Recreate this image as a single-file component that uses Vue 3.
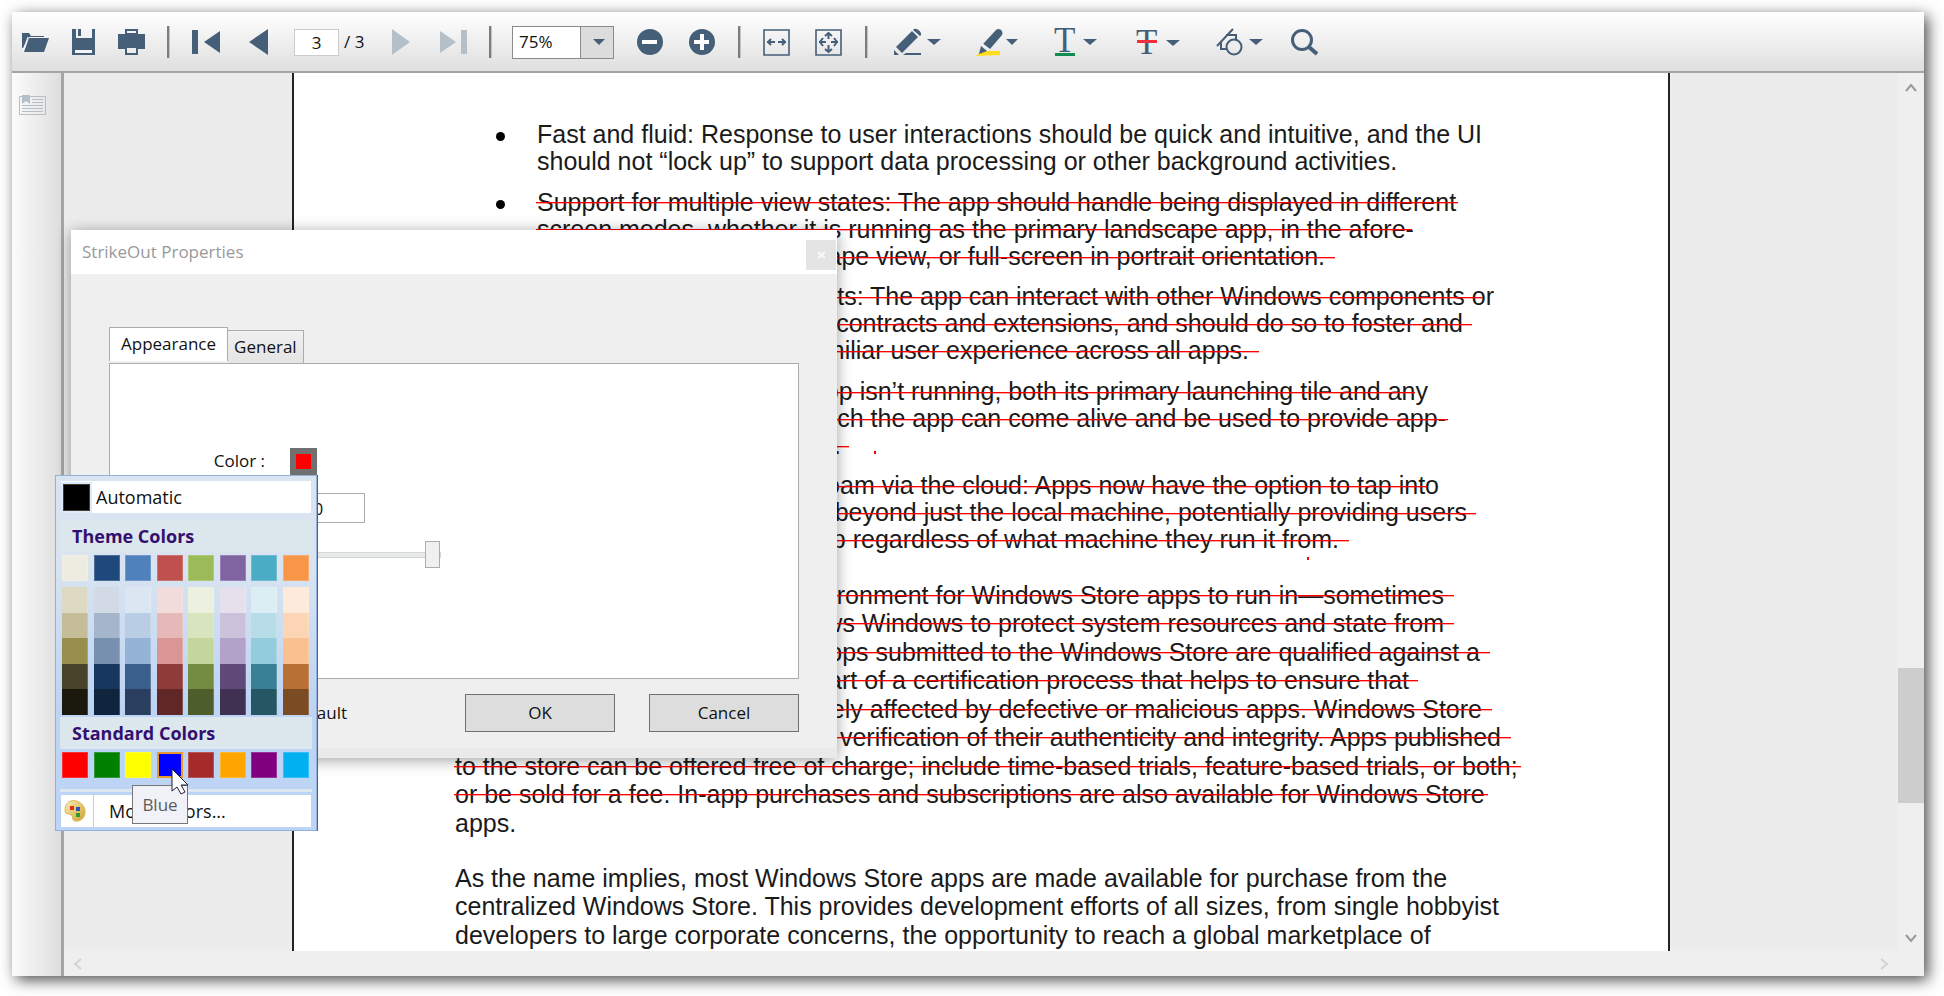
<script setup>
import { ref } from 'vue'

const pageNo = ref('3')
const zoom = ref('75%')
const opacity = ref('100')
const level = ref(100)

/* end: right edge of the line inside its column; strike: how far the rule runs past (or short of) the text */
const bullets = [
  [
    { text: 'Fast and fluid: Response to user interactions should be quick and intuitive, and the UI' },
    { text: 'should not “lock up” to support data processing or other background activities.' },
  ],
  [
    { text: 'Support for multiple view states: The app should handle being displayed in different', strike: 2 },
    { text: 'screen modes, whether it is running as the primary landscape app, in the afore-', strike: -2 },
    { text: 'landscape view, or full-screen in portrait orientation.', end: 788, strike: 10 },
  ],
  [
    { text: 'contracts: The app can interact with other Windows components or', end: 957, strike: -12 },
    { text: 'use contracts and extensions, and should do so to foster and', end: 926, strike: 9 },
    { text: 'familiar user experience across all apps.', end: 712, strike: 10 },
  ],
  [
    { text: 'app isn’t running, both its primary launching tile and any', end: 891, strike: -13 },
    { text: 'which the app can come alive and be used to provide app-', end: 909, strike: 2 },
    { text: 'activity.', end: 304, strike: 8 },
  ],
  [
    { text: 'roam via the cloud: Apps now have the option to tap into', end: 902, strike: -12 },
    { text: 'go beyond just the local machine, potentially providing users', end: 930, strike: 9 },
    { text: 'app regardless of what machine they run it from.', end: 802, strike: 10 },
  ],
]

const body = [
  [
    { text: 'environment for Windows Store apps to run in—sometimes', end: 989, strike: 10 },
    { text: 'allows Windows to protect system resources and state from', end: 989, strike: 10 },
    { text: 'apps submitted to the Windows Store are qualified against a', end: 1025, strike: 10 },
    { text: 'part of a certification process that helps to ensure that', end: 954, strike: 9 },
    { text: 'adversely affected by defective or malicious apps. Windows Store', end: 1027, strike: 10 },
    { text: 'and verification of their authenticity and integrity. Apps published', end: 1046, strike: 10 },
    { text: 'to the store can be offered free of charge; include time-based trials, feature-based trials, or both;', strike: 3 },
    { text: 'or be sold for a fee. In-app purchases and subscriptions are also available for Windows Store', strike: 3 },
    { text: 'apps.' },
  ],
  [
    { text: 'As the name implies, most Windows Store apps are made available for purchase from the' },
    { text: 'centralized Windows Store. This provides development efforts of all sizes, from single hobbyist' },
    { text: 'developers to large corporate concerns, the opportunity to reach a global marketplace of' },
  ],
]

const theme = ['#eeece1', '#1f497d', '#4f81bd', '#c0504d', '#9bbb59', '#8064a2', '#4bacc6', '#f79646']
const tints = [
  '#ddd9c3', '#d2dae5', '#dce6f2', '#f2dcdb', '#ebf1de', '#e6e0ec', '#dbeef4', '#fdeada',
  '#c4bd97', '#a5b5cc', '#b9cde5', '#e6b9b8', '#d7e4bd', '#ccc1da', '#b7dee8', '#fcd5b5',
  '#988e4c', '#7890b0', '#95b3d7', '#d99694', '#c3d69b', '#b3a2c7', '#93cddd', '#fac090',
  '#494429', '#17375e', '#3b5f8c', '#8f3b39', '#748c42', '#604a7a', '#388194', '#b97034',
  '#1b190e', '#10243e', '#2a3f60', '#602726', '#4d5d2c', '#403152', '#255663', '#7b4b23',
]
const standard = ['#ff0000', '#008000', '#ffff00', '#0000ff', '#a52a2a', '#ffa500', '#800080', '#00b0f0']

const boxStyle = (l) => (l.end ? { width: l.end + 'px' } : {})
</script>

<template>
  <div class="desk">
    <main class="window">
      <header class="toolbar">
        <div class="group files">
          <button aria-label="Open"><svg width="27" height="28"><path d="M0 5h7l2 3h13v1H7L1 20H0z" fill="#465f78"/><path d="M7 10h20l-5 14H2z" fill="#465f78"/><path d="M6 9L1 23" stroke="#fff"/></svg></button>
          <button aria-label="Save"><svg width="27" height="28"><path d="M2 1h4v9h16V1h3v26H2z" fill="#465f78"/><path d="M8 1h3v7H8z" fill="#465f78"/><path d="M5 22h17v3H5z" fill="#f4f4f4"/></svg></button>
          <button aria-label="Print"><svg width="27" height="28"><path d="M8 7V2h11v5M8 20v6h11v-6" fill="none" stroke="#465f78" stroke-width="2"/><path d="M0 6h27v15H0z" fill="#465f78"/><path d="M9 20h9v5H9z" fill="#eee"/><path d="M8 6h11" stroke="#465f78" stroke-width="2"/></svg></button>
        </div>
        <i class="sep"></i>
        <div class="group nav">
          <button aria-label="First page"><svg width="28" height="28"><path d="M0 2h6v24H0zM12 14L28 3v22z" fill="#465f78"/></svg></button>
          <button aria-label="Previous page"><svg width="26" height="28"><path d="M5 14L24 1v26z" fill="#465f78"/></svg></button>
          <label class="pages"><input v-model="pageNo" aria-label="Page number"><span>/ 3</span></label>
          <button aria-label="Next page"><svg width="26" height="28"><path d="M2 1v26l18-13z" fill="#b5bfc8"/></svg></button>
          <button aria-label="Last page"><svg width="27" height="28"><path d="M0 3v22l16-11zM21 2h6v24h-6z" fill="#b5bfc8"/></svg></button>
        </div>
        <i class="sep"></i>
        <div class="group zooming">
          <div class="combo">
            <input v-model="zoom" aria-label="Zoom level">
            <button aria-label="Zoom levels"><svg width="12" height="6"><path d="M0 0h12L6 6z" fill="#465f78"/></svg></button>
          </div>
          <button aria-label="Zoom out"><svg width="30" height="28"><circle cx="14" cy="14" r="13" fill="#465f78"/><path d="M6 12h15v4H6z" fill="#fff"/></svg></button>
          <button aria-label="Zoom in"><svg width="28" height="28"><circle cx="14" cy="14" r="13" fill="#465f78"/><path d="M6 12h15v4H6zM12 6h4v16h-4z" fill="#fff"/></svg></button>
        </div>
        <i class="sep"></i>
        <div class="group fit">
          <button aria-label="Fit width"><svg width="30" height="28"><g fill="none" stroke="#465f78" stroke-width="2"><path d="M1 2h25v25H1z" stroke-width="1.6"/><path d="M4 14h8M8 11l-3 3 3 3M15 14h8M19 11l3 3-3 3"/></g></svg></button>
          <button aria-label="Fit page"><svg width="28" height="28"><g fill="none" stroke="#465f78" stroke-width="2"><path d="M1 2h25v25H1z" stroke-width="1.6"/><path d="M4 14h7M8 10l-3 4 3 4M16 14h7M19 10l3 4-3 4M13.500 4v7M10 8l3.500-3L17 8M13.500 17v7M10 21l3.500 3 3.500-3"/></g></svg></button>
        </div>
        <i class="sep"></i>
        <div class="group notes">
          <button aria-label="Ink"><svg width="54" height="28"><g fill="#465f78"><path d="M2 19L18 3l6 6L8 25z"/><path d="M20 1c3-1 8 3 7 6l-1 1-7-6zM0 22l5 5H0z"/><path d="M12 25h15v2H9z"/><path d="M33 11h14l-7 6z"/></g></svg></button>
          <button aria-label="Highlight"><svg width="51" height="28"><path d="M0 28l5-5h19v4z" fill="#ffdd1a"/><g fill="#465f78"><path d="M7 16L20 2c3-3 8 1 6 5L14 21z"/><path d="M5 18l6 5-8 3z"/><path d="M30 11h12l-6 6z"/></g><path d="M7 16l7 6" stroke="#f3f3f3"/></svg></button>
          <button aria-label="Underline"><svg width="54" height="28"><text x="-1" y="24" font-family="Liberation Serif, serif" font-size="35" fill="#465f78">T</text><path d="M0 25h20v3H0z" fill="#118c4f"/><path d="M28 11h14l-7 6z" fill="#465f78"/></svg></button>
          <button aria-label="Strikeout"><svg width="51" height="28"><text x="-1" y="26" font-family="Liberation Serif, serif" font-size="35" fill="#465f78">T</text><path d="M0 12h20v3H0z" fill="#f22e3c"/><path d="M29 12h14l-7 6z" fill="#465f78"/></svg></button>
          <button aria-label="Shapes"><svg width="47" height="28"><g fill="none" stroke="#465f78" stroke-width="2"><path d="M1 18L17 1M10 7h10v5M5 13v8h5"/><circle cx="18" cy="19" r="7.500"/></g><path d="M33 11h14l-7 6z" fill="#465f78"/></svg></button>
          <button aria-label="Search"><svg width="28" height="28"><circle cx="11" cy="12" r="9.500" fill="none" stroke="#465f78" stroke-width="3"/><path d="M18 19l8 7" stroke="#465f78" stroke-width="4"/></svg></button>
        </div>
      </header>

      <div class="work">
        <aside class="rail">
          <button aria-label="Bookmarks"><svg width="27" height="20"><path d="M.5 1.500h26v18H.5z" fill="none" stroke="#b5bfc8"/><path d="M3 0h8v9L7 6 3 9z" fill="#b5bfc8"/><path d="M13 4.500h11M13 7.500h11M3 10.500h21M3 13.500h21M3 16.500h21" stroke="#b5bfc8"/></svg></button>
        </aside>
        <section class="viewer">
          <article class="page">
            <ul class="points">
              <li v-for="(item, i) in bullets" :key="i">
                <div v-for="line in item" :key="line.text" class="line" :class="{ fixed: line.end }" :style="boxStyle(line)">
                  <span>{{ line.text }}<i v-if="line.strike" class="rule" :style="{ right: -line.strike + 'px' }"></i></span>
                </div>
              </li>
            </ul>
            <div v-for="(para, i) in body" :key="i" class="para">
              <div v-for="line in para" :key="line.text" class="line" :class="{ fixed: line.end }" :style="boxStyle(line)">
                <span>{{ line.text }}<i v-if="line.strike" class="rule" :style="{ right: -line.strike + 'px' }"></i></span>
              </div>
            </div>
            <i class="speck one"></i>
            <i class="speck two"></i>
          </article>
        </section>
        <div class="vbar">
          <svg width="12" height="9"><path d="M1 8l5-6 5 6" fill="none" stroke="#999" stroke-width="2"/></svg>
          <div class="track"><i class="thumb"></i></div>
          <svg width="12" height="9"><path d="M1 1l5 6 5-6" fill="none" stroke="#999" stroke-width="2"/></svg>
        </div>
        <div class="hbar">
          <svg width="9" height="12"><path d="M8 1L2 6l6 5" fill="none" stroke="#d2d2d2" stroke-width="2"/></svg>
          <svg width="9" height="12"><path d="M1 1l6 5-6 5" fill="none" stroke="#d2d2d2" stroke-width="2"/></svg>
        </div>
      </div>

      <div class="dialog" role="dialog" aria-label="StrikeOut Properties">
        <div class="titlebar">
          <h1>StrikeOut Properties</h1>
          <button class="close" aria-label="Close"><svg width="9" height="8"><path d="M1 1l7 6M8 1L1 7" stroke="#fafafa" stroke-width="2"/></svg></button>
        </div>
        <div class="content">
          <div class="tabs">
            <button class="tab active">Appearance</button>
            <button class="tab">General</button>
          </div>
          <div class="panel">
            <label for="swatch">Color :</label>
            <button id="swatch" class="swatch"><i></i></button>
            <label for="opacity">Opacity :</label>
            <input id="opacity" v-model="opacity" class="number">
            <input v-model="level" class="slider" type="range" min="0" max="100" aria-label="Opacity level">
          </div>
          <div class="footer">
            <label class="default"><input type="checkbox">Set as Default</label>
            <button>OK</button>
            <button>Cancel</button>
          </div>
        </div>
      </div>

      <div class="picker">
        <button class="auto"><i></i>Automatic</button>
        <h2>Theme Colors</h2>
        <div class="grid">
          <button v-for="c in theme" :key="c" :aria-label="c" :style="{ background: c }"></button>
        </div>
        <div class="grid tints">
          <button v-for="c in tints" :key="c" :aria-label="c" :style="{ background: c }"></button>
        </div>
        <h2 class="std">Standard Colors</h2>
        <div class="grid">
          <button v-for="(c, i) in standard" :key="c" :aria-label="c" :class="{ hot: i === 3 }" :style="{ background: c }"></button>
        </div>
        <hr>
        <button class="more">
          <span class="cell"><svg width="22" height="22"><defs><linearGradient id="pal" x2="1" y2="1"><stop offset="0" stop-color="#fbf0b4"/><stop offset="1" stop-color="#cf9f2e"/></linearGradient></defs><path d="M7 1c6-2 13 3 14 9 1 8-5 12-10 11-4-1-1-5-4-6-3-2-6 0-6-5 0-4 2-8 6-9z" fill="url(#pal)" stroke="#d8b85a"/><path d="M6 6h4v4H6z" fill="#d8321c"/><path d="M12 7h4v4h-4z" fill="#2a55b8"/><path d="M12 13h4v4h-4z" fill="#2f9a2a"/></svg></span>
          <span>More Colors...</span>
        </button>
        <div class="tip" role="tooltip">Blue</div>
        <svg class="cursor" width="20" height="28"><path d="M1 1v22l5-4 4 7 4-2-4-7h7z" fill="#fff" stroke="#223"/></svg>
      </div>
    </main>
  </div>
</template>

<style>
body { background: #fff; }
</style>

<style scoped>
* { box-sizing: border-box; }
button, input { font: inherit; color: inherit; border: 0; padding: 0; margin: 0; background: none; }
svg { display: block; overflow: visible; }

.desk { height: 100vh; padding: 12px 20px 20px 12px; font: 17px/24px "Open Sans", "Noto Sans", sans-serif; color: #111; overflow: hidden; }
.window { position: relative; height: 100%; display: flex; flex-direction: column; background: #ececec; box-shadow: 4px 4px 14px rgba(0, 0, 0, .7); }

.toolbar { flex: none; height: 61px; display: flex; align-items: flex-start; padding: 14px 10px 0; background: linear-gradient(#fff, #dfdfdf); border-bottom: 2px solid #a5a5a5; }
.sep { flex: none; width: 3px; height: 32px; margin: 0 20px 0 22px; background: #7d7d7d; border: solid #c4c4c4; border-width: 0 1px 0 0; }
.group { display: flex; align-items: center; height: 32px; }
.files { gap: 21px; }
.nav { gap: 24px; padding-left: 2px; }
.pages { display: flex; align-items: center; gap: 5px; }
.pages input { width: 45px; height: 27px; border: 1px solid #ccc; background: #fff; text-align: center; }
.pages span { width: 22px; white-space: nowrap; }
.zooming { gap: 22px; }
.combo { display: flex; width: 102px; height: 33px; border: 1px solid #8a8a8a; background: #fff; }
.combo input { flex: 1; min-width: 0; padding-left: 6px; }
.combo button { width: 33px; display: flex; align-items: center; justify-content: center; padding-left: 3px; background: #dcdcdc; border-left: 1px solid #8a8a8a; }
.fit { gap: 22px; padding-left: 2px; }
.notes { gap: 28px; padding-left: 6px; }

.work { flex: 1; min-height: 0; display: grid; grid-template: minmax(0, 1fr) 25px / 52px minmax(0, 1fr) 26px; }
.rail { grid-row: 1 / 3; padding: 22px 7px; background: linear-gradient(90deg, #fbfbfb, #dedede); border-right: 3px solid #a5a5a5; }
.viewer { overflow: hidden; display: flex; justify-content: center; align-items: flex-start; }
.page { position: relative; width: 1378px; min-height: 100%; padding: 48px 0 0 161px; background: #fff; border: solid #222; border-width: 0 2px; font: 25px/27px "Liberation Sans", Arial, sans-serif; color: #1a1a1a; }
.points { list-style: none; margin: 0; padding: 0 0 0 82px; }
.points li { position: relative; margin-top: 13px; }
.points li:nth-child(even) { margin-top: 14px; }
.points li:first-child { margin-top: 0; }
.points li::before { content: ""; position: absolute; left: -41px; top: 11px; width: 9px; height: 9px; border-radius: 50%; background: #000; }
.line { height: 27px; white-space: nowrap; }
.line.fixed { display: flex; justify-content: flex-end; }
.line span { position: relative; }
.rule { position: absolute; left: -1px; top: 14px; height: 1px; background: #f00; box-shadow: 0 1px rgba(255, 0, 0, .35); }
.para { margin-top: 28px; line-height: 28px; }
.para + .para { margin-top: 27px; }
.para .line { height: 28px; }
.para .line:nth-child(even) { height: 29px; }
.speck { position: absolute; width: 2px; height: 3px; background: #f00; }
.speck.one { left: 580px; top: 378px; }
.speck.two { left: 1013px; top: 484px; }

.vbar { display: flex; flex-direction: column; align-items: center; padding: 10px 0 8px; background: #efefef; }
.track { flex: 1; align-self: stretch; display: flex; flex-direction: column; }
.track::before { content: ""; flex: 576 0 0; }
.track::after { content: ""; flex: 131 0 0; }
.thumb { flex: 135 0 0; background: #cdcdcd; }
.hbar { grid-column: 2 / 4; display: flex; align-items: center; justify-content: space-between; padding: 0 35px 0 9px; background: #efefef; }

.dialog { position: absolute; left: 59px; top: 218px; width: 766px; background: #efefef; box-shadow: 0 2px 14px rgba(0, 0, 0, .38); border-bottom: 10px solid #eaeaea; }
.titlebar { height: 44px; display: flex; justify-content: space-between; align-items: center; padding: 0 1px 0 11px; background: #fff; color: #999; }
h1 { margin: 0; font-size: 17px; font-weight: 400; }
.close { width: 30px; height: 30px; margin-top: 6px; display: flex; align-items: center; justify-content: center; background: #e4e4e4; }
.content { padding: 53px 38px 16px; }
.tabs { display: flex; align-items: flex-end; }
.tab { height: 33px; padding: 0 6px; margin-top: 3px; background: linear-gradient(#f0f0f0, #e4e4e4); border: 1px solid #acacac; border-width: 1px 1px 0 0; }
.tab.active { height: 34px; padding: 0 11px 2px; margin: 0 0 2px; background: #fff; border-width: 1px 1px 0 1px; }
.panel { display: grid; grid-template-columns: 155px 151px; gap: 17px 25px; grid-auto-rows: 30px; align-items: center; height: 316px; padding-top: 82px; background: #fff; border: 1px solid #acacac; align-content: start; }
.panel label { text-align: right; }
.swatch { width: 27px; height: 27px; padding: 6px; background: #707070; }
.swatch i { display: block; height: 15px; background: #f00; }
.number { width: 75px; height: 30px; border: 1px solid #ababab; padding-left: 3px; }
.slider { grid-column: 2; appearance: none; height: 27px; width: 100%; }
.slider::-webkit-slider-runnable-track { height: 6px; background: #e7eaea; border: 1px solid #d6d6d6; }
.slider::-webkit-slider-thumb { appearance: none; width: 15px; height: 27px; margin-top: -12px; background: #f0f0f0; border: 1px solid #acacac; }
.footer { display: flex; gap: 34px; margin-top: 15px; }
.footer button { width: 150px; height: 38px; background: #ddd; border: 1px solid #707070; }
.default { width: 238px; margin-right: auto; display: flex; align-items: center; justify-content: flex-end; gap: 8px; }

.picker { position: absolute; left: 43px; top: 463px; width: 262px; padding: 5px 5px 3px; border: 1px solid #93afdc; background: linear-gradient(#d9e4f0 25%, #bdd4f4 65%); box-shadow: 1px 0 #47658f; }
.auto { width: 100%; height: 32px; display: flex; align-items: center; gap: 6px; padding-left: 2px; background: #fff; font-size: 18px; }
.auto i { width: 27px; height: 27px; background: #000; border: 1px solid #443c28; box-shadow: 0 0 0 2px #dcebfb; }
h2 { margin: 7px -1px 3px; height: 32px; padding-left: 12px; font-size: 18px; line-height: 32px; font-weight: 700; color: #331070; background: #dde7ee; }
h2.std { margin-top: 2px; }
.grid { display: grid; grid-template-columns: repeat(8, 26px); justify-content: space-between; padding: 0 2px 0 1px; grid-auto-rows: 26px; }
.grid button { border: 1px solid rgba(255, 255, 255, .2); }
.grid .hot { border: 2px solid #e8992e; }
.tints { margin-top: 6px; height: 128px; grid-template-rows: repeat(5, 1fr); }
.tints button { border-width: 0 1px 0 0; }
hr { margin: 11px -1px 3px; height: 3px; border: 0; background: #dde7ee; }
.more { width: 100%; height: 32px; display: flex; align-items: center; gap: 15px; background: #fff; font-size: 18px; }
.cell { width: 33px; height: 32px; display: flex; align-items: center; justify-content: center; padding-right: 4px; border-right: 1px solid #ccc; }
.tip { position: absolute; left: 76px; top: 309px; width: 56px; height: 39px; line-height: 38px; text-align: center; color: #5c5c5c; background: #f1f2f7; border: 1px solid #767676; }
.cursor { position: absolute; left: 115px; top: 292px; }
</style>
